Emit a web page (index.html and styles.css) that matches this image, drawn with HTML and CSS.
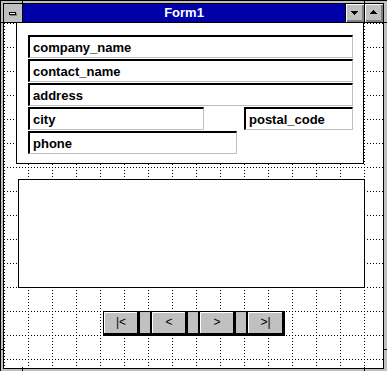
FILE: index.html
```html
<!DOCTYPE html>
<html>
<head>
<meta charset="utf-8">
<link rel="stylesheet" href="styles.css">
</head>
<body>
<div class="window">
  <div class="frame-inner">
    <div class="titlebar">
      <div class="sysmenu"><span class="sysbar"></span></div>
      <div class="caption">Form1</div>
      <div class="capbtn">
        <svg width="18" height="18" viewBox="0 0 18 18"><path d="M5 7h7v1h-1v1h-1v1h-1v1h-1v-1h-1v-1h-1v-1h-1z" fill="#000"/></svg>
      </div>
      <div class="capbtn">
        <svg width="18" height="18" viewBox="0 0 18 18"><path d="M5 10h7v-1h-1v-1h-1v-1h-1v-1h-1v1h-1v1h-1v1h-1z" fill="#000"/></svg>
      </div>
    </div>
    <div class="client">
      <div class="panel">
        <div class="field w-full">company_name</div>
        <div class="field w-full">contact_name</div>
        <div class="field w-full">address</div>
        <div class="row">
          <div class="field w-city">city</div>
          <div class="field w-postal">postal_code</div>
        </div>
        <div class="field w-phone">phone</div>
      </div>
      <div class="memo"></div>
      <div class="nav">
        <div class="navbtn">|&lt;</div>
        <div class="navgap"></div>
        <div class="navbtn">&lt;</div>
        <div class="navgap"></div>
        <div class="navbtn">&gt;</div>
        <div class="navgap"></div>
        <div class="navbtn last">&gt;|</div>
      </div>
    </div>
  </div>
  <span class="notch nv n-tl"></span>
  <span class="notch nv n-tr"></span>
  <span class="notch nv n-bl"></span>
  <span class="notch nv n-br"></span>
  <span class="notch nh n-lt"></span>
  <span class="notch nh n-lb"></span>
  <span class="notch nh n-rt"></span>
  <span class="notch nh n-rb"></span>
</div>
</body>
</html>
```
FILE: styles.css
```css
html, body {
  margin: 0;
  padding: 0;
  background: #c0c0c0;
}

.window {
  position: relative;
  width: 387px;
  height: 371px;
  box-sizing: border-box;
  background: #c0c0c0;
  border-left: 1px solid #000;
  border-top: 1px solid #000;
  padding: 2px 3px 2px 2px;
  font-family: "Liberation Sans", Arial, sans-serif;
}

.frame-inner {
  height: 100%;
  box-sizing: border-box;
  border: 1px solid #000;
  display: flex;
  flex-direction: column;
}

.titlebar {
  display: flex;
  height: 19px;
  box-sizing: border-box;
  border-bottom: 1px solid #000;
}

.sysmenu {
  width: 19px;
  box-sizing: border-box;
  border-right: 1px solid #000;
  background: #c0c0c0;
  display: flex;
  align-items: center;
  justify-content: center;
}

.sysbar {
  display: block;
  width: 5px;
  height: 1px;
  background: #fff;
  border: 1px solid #000;
  box-shadow: 1px 1px 0 #808080;
  margin: 1px 1px 0 0;
}

.caption {
  flex: 1;
  background: #0000a8;
  color: #fff;
  font-weight: bold;
  font-size: 13px;
  line-height: 18px;
  text-align: center;
}

.capbtn {
  width: 19px;
  box-sizing: border-box;
  border-left: 1px solid #000;
  background: #c0c0c0;
  box-shadow: inset 1px 1px 0 #fff, inset -1px -1px 0 #808080, inset -2px -2px 0 #808080;
}

.capbtn svg {
  display: block;
}

.client {
  flex: 1;
  background-color: #fff;
  background-image:
    conic-gradient(at 1px 1px, transparent 75%, #000 0),
    conic-gradient(at 1px 1px, transparent 75%, #000 0);
  background-size: 3px 24px, 24px 3px;
  background-position: 0 0, 0 0;
  display: flex;
  flex-direction: column;
  align-items: flex-start;
}

.panel {
  margin-left: 12px;
  width: 348px;
  height: 141px;
  box-sizing: border-box;
  border: 1px solid #000;
  border-top: 0;
  background: #fff;
  padding: 12px 0 0 11px;
  display: flex;
  flex-direction: column;
  gap: 1px;
}

.row {
  display: flex;
  gap: 40px;
}

.field {
  box-sizing: border-box;
  height: 23px;
  border-top: 2px solid #000;
  border-left: 2px solid #000;
  border-right: 1px solid #c0c0c0;
  border-bottom: 1px solid #c0c0c0;
  padding: 1px 0 0 3px;
  font-weight: bold;
  font-size: 13px;
  line-height: 20px;
  color: #000;
  white-space: nowrap;
}

.w-full { width: 325px; }
.w-city { width: 176px; }
.w-postal { width: 109px; }
.w-phone { width: 209px; }

.memo {
  margin: 15px 0 0 14px;
  width: 347px;
  height: 109px;
  box-sizing: border-box;
  border: 1px solid #000;
  background: #fff;
}

.nav {
  margin: 23px 0 0 99px;
  display: flex;
  height: 25px;
  box-sizing: border-box;
  border-top: 1px solid #000;
  border-bottom: 3px solid #000;
  background: #c0c0c0;
}

.navbtn {
  width: 37px;
  box-sizing: border-box;
  border-left: 1px solid #000;
  border-right: 3px solid #000;
  background: #c0c0c0;
  box-shadow: inset 1px 1px 0 #fff;
  font-size: 12px;
  line-height: 21px;
  text-align: center;
  padding-left: 1px;
  color: #000;
}

.navbtn.last {
  width: 38px;
}

.navgap {
  width: 11px;
  box-sizing: border-box;
  border-right: 1px solid #000;
}

.notch {
  position: absolute;
  background: #000;
}

.nv {
  width: 1px;
  height: 4px;
}

.nh {
  width: 4px;
  height: 1px;
}

.n-tl { left: 21px; top: -1px; }
.n-tr { left: 363px; top: -1px; }
.n-bl { left: 21px; top: 366px; }
.n-br { left: 363px; top: 366px; }
.n-lt { left: -1px; top: 21px; }
.n-lb { left: -1px; top: 348px; }
.n-rt { left: 382px; top: 21px; }
.n-rb { left: 382px; top: 348px; }
```
